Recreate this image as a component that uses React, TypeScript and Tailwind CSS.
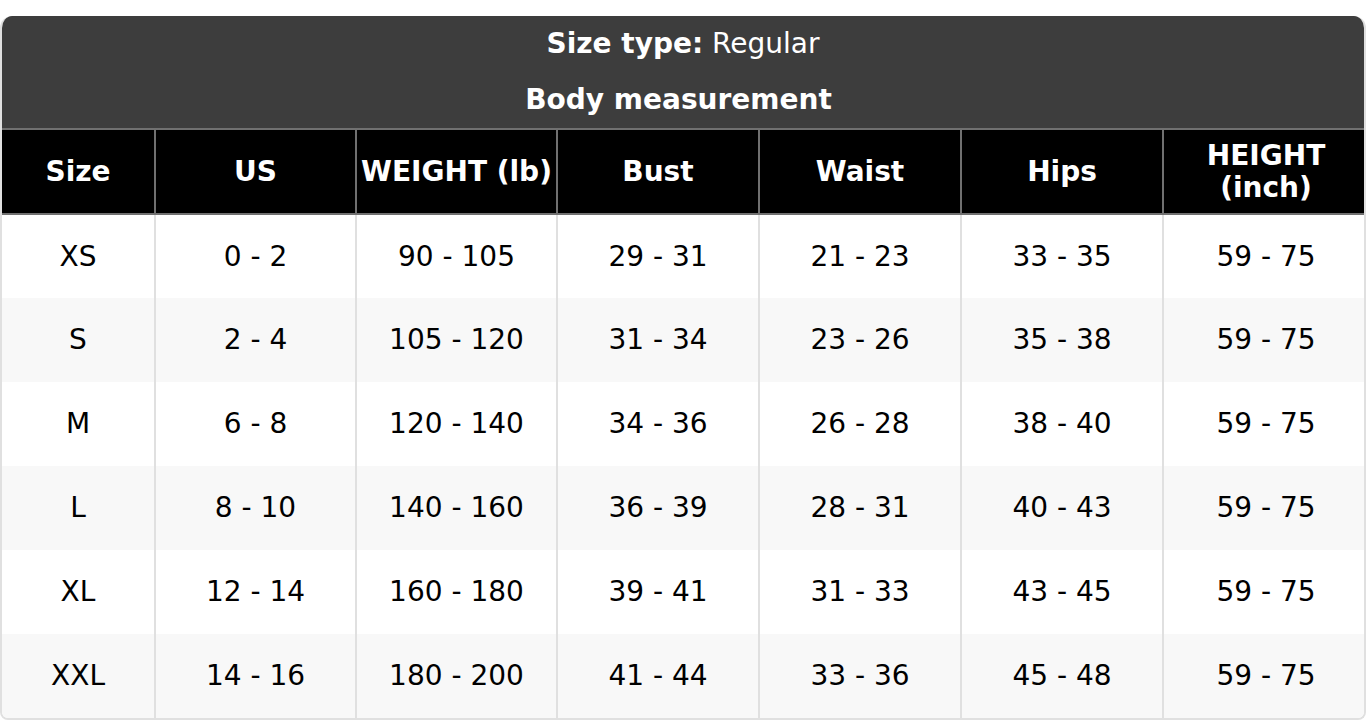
const columns = ["Size", "US", "WEIGHT (lb)", "Bust", "Waist", "Hips", "HEIGHT (inch)"];

const rows = [
  ["XS", "0 - 2", "90 - 105", "29 - 31", "21 - 23", "33 - 35", "59 - 75"],
  ["S", "2 - 4", "105 - 120", "31 - 34", "23 - 26", "35 - 38", "59 - 75"],
  ["M", "6 - 8", "120 - 140", "34 - 36", "26 - 28", "38 - 40", "59 - 75"],
  ["L", "8 - 10", "140 - 160", "36 - 39", "28 - 31", "40 - 43", "59 - 75"],
  ["XL", "12 - 14", "160 - 180", "39 - 41", "31 - 33", "43 - 45", "59 - 75"],
  ["XXL", "14 - 16", "180 - 200", "41 - 44", "33 - 36", "45 - 48", "59 - 75"],
];

const widths = ["w-[153px]", "w-[201px]", "w-[201px]", "w-[202px]", "w-[202px]", "w-[202px]", "w-[205px]"];

export default function App() {
  return (
    <div className="min-h-screen bg-white pt-4 font-['DejaVu_Sans',sans-serif]">
      <div className="overflow-hidden rounded-t-xl rounded-b-lg border-2 border-t-0 border-[#e0e0e0]">
        <div className="bg-[#3d3d3d] text-center text-[28px] text-white">
          <div className="flex h-14 items-center justify-center">
            <span className="font-bold">Size type:</span>&nbsp;Regular
          </div>
          <div className="flex h-14 items-center justify-center pr-[9px] font-bold">Body measurement</div>
        </div>
        <table className="w-full table-fixed border-collapse text-center text-[28px]">
          <thead>
            <tr className="h-[85px] bg-black text-white">
              {columns.map((c, i) => (
                <th
                  key={c}
                  className={`${widths[i]} border-2 border-[#707070] px-1 text-[28px] leading-8 font-bold ${
                    i === 0 ? "border-l-0" : ""
                  } ${i === columns.length - 1 ? "border-r-0" : ""}`}
                >
                  {c === "HEIGHT (inch)" ? (
                    <>
                      HEIGHT
                      <br />
                      (inch)
                    </>
                  ) : (
                    c
                  )}
                </th>
              ))}
            </tr>
          </thead>
          <tbody className="text-black">
            {rows.map((r, ri) => (
              <tr key={r[0]} className={`h-[84px] ${ri % 2 === 1 ? "bg-[#f8f8f8]" : "bg-white"}`}>
                {r.map((v, i) => (
                  <td
                    key={i}
                    className={`border-x-2 border-[#e0e0e0] ${i === 0 ? "border-l-0" : ""} ${
                      i === r.length - 1 ? "border-r-0" : ""
                    }`}
                  >
                    {v}
                  </td>
                ))}
              </tr>
            ))}
          </tbody>
        </table>
      </div>
    </div>
  );
}
